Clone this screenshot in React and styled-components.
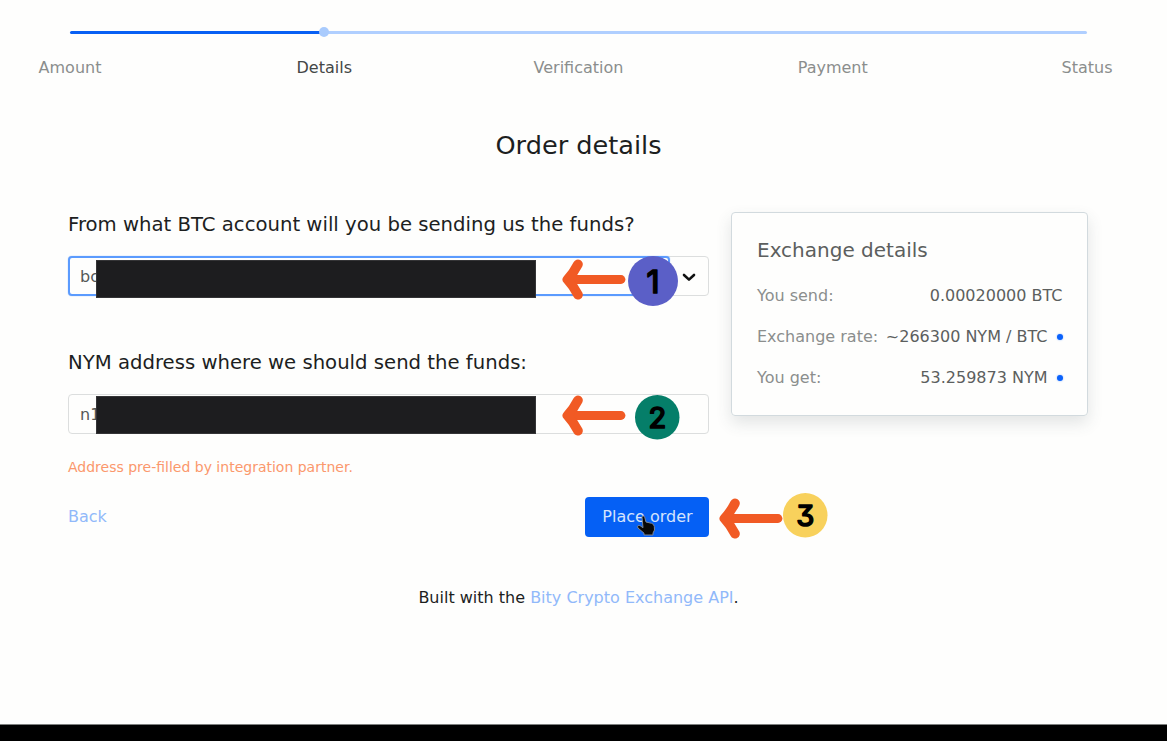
import React from 'react';
import styled, { createGlobalStyle } from 'styled-components';

const GlobalStyle = createGlobalStyle`
  *, *::before, *::after { box-sizing: border-box; }
  body {
    margin: 0;
    background: #fefefd;
    color: #1d1f1f;
    font: 16px/24px 'DejaVu Sans', sans-serif;
  }
`;

const Page = styled.div`
  height: 741px;
  display: flex;
  flex-direction: column;
  overflow: hidden;
`;

const Content = styled.main`
  flex: 1;
  display: flex;
  flex-direction: column;
`;

const BottomBar = styled.footer`
  height: 17px;
  background: #000;
  border-top: 1px solid #7d7f7e;
`;

const Stepper = styled.nav`
  padding: 27px 80px 0 70px;
`;

const Track = styled.div`
  display: flex;
  align-items: center;
  height: 10px;
`;

const Segment = styled.div`
  height: 3px;
  border-radius: 2px;
  background: ${(p) => (p.$done ? '#0860f4' : '#b0cfff')};
  flex: ${(p) => p.$span} 1 0;
`;

const TrackDot = styled.div`
  width: 10px;
  height: 10px;
  margin: 0 -5px;
  border-radius: 50%;
  background: #a9cbfd;
  z-index: 1;
`;

const StepLabels = styled.div`
  display: flex;
  justify-content: space-between;
  margin-top: 19px;
`;

const Step = styled.span`
  display: flex;
  justify-content: center;
  width: 0;
  white-space: nowrap;
  color: ${(p) => (p.$current ? '#444746' : '#8b8e8d')};
`;

const Title = styled.h1`
  margin: 49px 10px 0 0;
  text-align: center;
  font-size: 25.6px;
  line-height: 32px;
  font-weight: 400;
`;

const Columns = styled.div`
  display: flex;
  align-items: flex-start;
  gap: 22px;
  margin: 51px 79px 0 68px;
`;

const Form = styled.form`
  width: 641px;
`;

const Label = styled.label`
  display: block;
  font-size: 19.66px;
  line-height: 26px;
  white-space: nowrap;
`;

const Field = styled.div`
  position: relative;
  display: flex;
  height: 40px;
  margin: ${(p) => p.$margin};
  border: 1px solid #dcdede;
  border-radius: 4px;
  color: #555857;
`;

const FieldValue = styled.div`
  flex: 1;
  margin: -1px 0 -1px -1px;
  padding: 8px 11px;
  border: 1px solid transparent;
  border-radius: 4px;
  ${(p) => p.$focused && 'border: 2px solid #5b9bfe; padding: 7px 10px; box-shadow: 0 0 1px #5b9bfe;'}
`;

const Toggle = styled.div`
  display: flex;
  align-items: center;
  justify-content: center;
  width: 38px;
  padding-top: 2px;
`;

const Redaction = styled.div`
  position: absolute;
  left: 27px;
  top: ${(p) => p.$top}px;
  width: 440px;
  height: 38px;
  background: #1d1d1f;
  border: 1px solid #343436;
`;

const Callout = styled.div`
  position: absolute;
  left: ${(p) => p.$left}px;
  top: ${(p) => p.$top}px;
  display: flex;
  align-items: flex-start;
  gap: ${(p) => p.$gap}px;
`;

const Arrow = styled.svg`
  display: block;
  flex: none;
  margin-top: ${(p) => p.$drop}px;
`;

const Badge = styled.svg`
  display: block;
  flex: none;
  font-family: Inter, sans-serif;
  font-weight: 400;
  font-feature-settings: 'cv09';
`;

const Hint = styled.p`
  margin: 0 0 20px;
  font-size: 14px;
  line-height: 20px;
  color: #fb986c;
`;

const Actions = styled.div`
  position: relative;
  display: flex;
  align-items: center;
  justify-content: space-between;
`;

const Link = styled.a`
  color: #91b9fa;
`;

const Submit = styled.button`
  width: 124px;
  height: 40px;
  padding: 0 0 0 1px;
  border: 0;
  border-radius: 4px;
  background: #0560f5;
  color: #d4e3fd;
  font: inherit;
`;

const Pointer = styled.svg`
  position: absolute;
  left: 568px;
  top: 18px;
`;

const Card = styled.aside`
  width: 357px;
  height: 204px;
  padding: 25px 24.5px 25px 25px;
  border: 1px solid #d2dade;
  border-radius: 4px;
  box-shadow: 0 7px 16px rgba(60, 70, 80, 0.14);
`;

const CardTitle = styled.h2`
  margin: 0 0 21px;
  font-size: 20px;
  line-height: 25px;
  font-weight: 400;
  color: #5c5f5e;
`;

const Row = styled.div`
  display: flex;
  align-items: center;
  height: 24px;
  margin-bottom: 17px;
  white-space: nowrap;
  color: #5c5f5e;
`;

const RowName = styled.span`
  flex: 1;
  color: #8b8e8d;
`;

const LiveDot = styled.span`
  width: 6px;
  height: 6px;
  margin: 0 0 0 9px;
  border-radius: 50%;
  background: #0b62fb;
  box-shadow: 0 0 2px #8bb6ff;
`;

const Credit = styled.p`
  margin: 49px 10px 0 0;
  text-align: center;
`;

const steps = ['Amount', 'Details', 'Verification', 'Payment', 'Status'];

const rates = [
  { name: 'You send:', value: '0.00020000 BTC' },
  { name: 'Exchange rate:', value: '~266300 NYM / BTC', live: true },
  { name: 'You get:', value: '53.259873 NYM', live: true },
];

function Marker({ left, top, gap, arrowDrop, size, fontSize, color, children }) {
  return (
    <Callout $left={left} $top={top} $gap={gap}>
      <Arrow $drop={arrowDrop} width="64" height="41" viewBox="0 0 64 41" fill="none" stroke="#f15a24" strokeLinecap="round" strokeLinejoin="round">
        <path d="M59 20.5H7" strokeWidth="8.8" />
        <path d="M16 5.2Q11.5 14 5.4 20.5Q11.5 27 16 35.8" strokeWidth="9.6" />
      </Arrow>
      <Badge width={size} height={size}>
        <circle cx={size / 2} cy={size / 2} r={size / 2} fill={color} />
        <text
          transform={`translate(${size / 2} ${size / 2 + fontSize * 0.364 + 0.6}) scale(1.04 1)`}
          fontSize={fontSize}
          textAnchor="middle"
          stroke="#000"
          strokeWidth="1.7"
          strokeLinejoin="round"
        >
          {children}
        </text>
      </Badge>
    </Callout>
  );
}

export default function App() {
  return (
    <Page>
      <GlobalStyle />
      <Content>
        <Stepper>
          <Track>
            <Segment $done $span={1} />
            <TrackDot />
            <Segment $span={3} />
          </Track>
          <StepLabels>
            {steps.map((step) => (
              <Step key={step} $current={step === 'Details'}>{step}</Step>
            ))}
          </StepLabels>
        </Stepper>
        <Title>Order details</Title>
        <Columns>
          <Form>
            <Label>From what BTC account will you be sending us the funds?</Label>
            <Field $margin="18px 0 54px">
              <FieldValue $focused>bc</FieldValue>
              <Toggle>
                <svg width="14" height="9" viewBox="0 0 14 9" fill="none" stroke="#101111" strokeWidth="2.6" strokeLinecap="round" strokeLinejoin="round">
                  <path d="M2 2L7 6.6L12 2" />
                </svg>
              </Toggle>
              <Redaction $top={3.4} />
              <Marker left={493} top={-1} gap={2} arrowDrop={3} size={50} fontSize={31} color="#5b5fc7">1</Marker>
            </Field>
            <Label>NYM address where we should send the funds:</Label>
            <Field $margin="18px 0 23px">
              <FieldValue>n1</FieldValue>
              <Redaction $top={1} />
              <Marker left={493} top={0} gap={9} arrowDrop={-0.5} size={44.5} fontSize={28} color="#057e69">2</Marker>
            </Field>
            <Hint>Address pre-filled by integration partner.</Hint>
            <Actions>
              <Link>Back</Link>
              <Submit type="button">Place order</Submit>
              <Pointer width="20" height="23" viewBox="0 0 20 23">
                <path
                  d="M6 2.2Q6 1 7.2 1Q8.3 1 8.7 2.2L10 7L15.5 8.3Q18 9 18.3 11.5L18.5 15L17 18V20H8V18.2L2 13Q.8 11.5 2 10.8Q3.2 10 4.5 11L7 12.7Z"
                  fill="#080808"
                  stroke="#7d8799"
                  strokeWidth="1"
                />
              </Pointer>
              <Marker left={651} top={-4} gap={0} arrowDrop={4.5} size={44.5} fontSize={28} color="#f8d15c">3</Marker>
            </Actions>
          </Form>
          <Card>
            <CardTitle>Exchange details</CardTitle>
            {rates.map((rate) => (
              <Row key={rate.name}>
                <RowName>{rate.name}</RowName>
                <span>{rate.value}</span>
                {rate.live && <LiveDot />}
              </Row>
            ))}
          </Card>
        </Columns>
        <Credit>
          Built with the <Link>Bity Crypto Exchange API</Link>.
        </Credit>
      </Content>
      <BottomBar />
    </Page>
  );
}
